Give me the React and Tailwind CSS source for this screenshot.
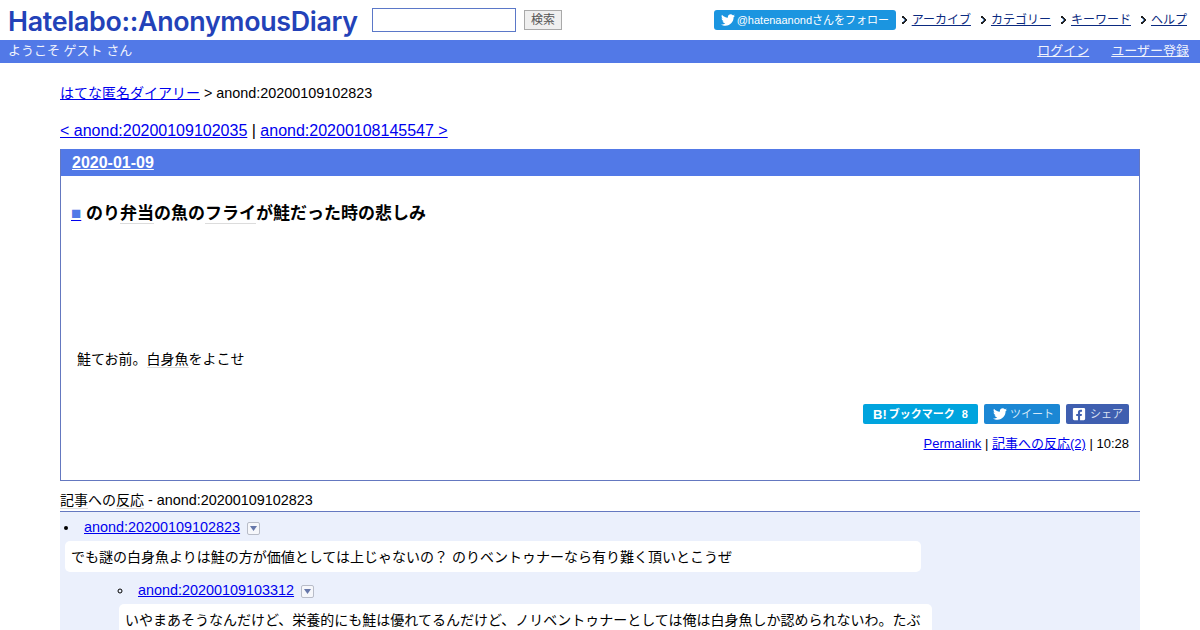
import React from "react";
import { FaTwitter, FaFacebookSquare } from "react-icons/fa";

const Kw = ({ children }) => (
  <span className="border-b border-[#dcdcdc]">{children}</span>
);

const L = ({ children }) => <span className="text-[14.4px]">{children}</span>;

const Arrow = () => (
  <svg width="7" height="10" viewBox="0 0 7 10" className="mr-[3px] shrink-0">
    <path d="M0 1h2v1h1v1h1v1h1v2h-1v1h-1v1h-1v1h-2v-2h1v-1h1v-2h-1v-1h-1z" fill="#222" />
    <path d="M1 3h1v1h1v2h-1v1h-1v-1h1v-2h-1z" fill="#5a8cc8" />
  </svg>
);

const Nav = ({ children, className = "" }) => (
  <div className={`flex items-center ${className}`}>
    <Arrow />
    <a href="#" className="text-[12px] text-[#0b2a80] underline leading-none">{children}</a>
  </div>
);

const Caret = () => (
  <span className="ml-[7px] inline-flex h-[13px] w-[13px] items-center justify-center rounded-[2px] border border-[#b8bcc8] bg-[#f6f7fb] align-[1px]">
    <svg width="7" height="5" viewBox="0 0 7 5"><path d="M0 0h7L3.5 5z" fill="#6677aa" /></svg>
  </span>
);

export default function App() {
  return (
    <div className="h-[630px] w-[1200px] overflow-hidden bg-white font-['Liberation_Sans','Noto_Sans_CJK_JP',sans-serif] text-[14px] text-black">
      <header className="flex h-[40px] items-center pl-[8px] pr-[13px]">
        <div className="w-[352px] whitespace-nowrap font-['Inter',sans-serif] text-[26.8px] font-semibold leading-none tracking-[-0.3px] text-[#2342b8] relative top-[1px]">Hatelabo::AnonymousDiary</div>
        <input className="ml-[12px] h-[24px] w-[144px] border border-[#5b78c8] bg-white" />
        <button className="ml-[8px] h-[20px] w-[38px] border border-[#a9a9a9] bg-[#efefef] text-[12px] leading-none text-[#555]">検索</button>
        <div className="ml-auto flex items-center">
          <a className="flex h-[20px] w-[182px] items-center rounded-[3px] bg-[#1b95e0] pl-[7px] text-[11px] text-white">
            <FaTwitter className="mr-[2px] text-[14px]" />
            <span className="whitespace-nowrap">@hatenaanondさんをフォロー</span>
          </a>
          <Nav className="ml-[6px]">アーカイブ</Nav>
          <Nav className="ml-[10px]">カテゴリー</Nav>
          <Nav className="ml-[10px]">キーワード</Nav>
          <Nav className="ml-[10px]">ヘルプ</Nav>
        </div>
      </header>

      <div className="flex h-[23px] items-center bg-[#5279e7] pb-[1px] pl-[8px] pr-[11px] text-[13px] text-[#f0f3fc]">
        <span>ようこそ ゲスト さん</span>
        <div className="ml-auto flex gap-[22px]">
          <a href="#" className="underline">ログイン</a>
          <a href="#" className="underline">ユーザー登録</a>
        </div>
      </div>

      <main className="px-[60px]">
        <p className="mt-[21px] leading-[18px]">
          <a href="#" className="text-[#0000ee] underline">はてな匿名ダイアリー</a> <L>&gt; anond:20200109102823</L>
        </p>
        <p className="mt-[19px] text-[16px] leading-[20px]">
          <a href="#" className="text-[#0000ee] underline">&lt; anond:20200109102035</a> | <a href="#" className="text-[#0000ee] underline">anond:20200108145547 &gt;</a>
        </p>

        <section className="mt-[8px] h-[332px] border border-[#5279e7] border-x-[#6478c0] border-b-[#6478c0]">
          <div className="flex h-[26px] items-center bg-[#5279e7] pl-[11px]">
            <a href="#" className="text-[16px] font-bold text-white underline">2020-01-09</a>
          </div>
          <h1 className="ml-[10px] mt-[27px] text-[17px] font-bold leading-[22px]">
            <a href="#" className="font-normal text-[#5279e7] underline decoration-[#0000ee]">■</a>{" "}
            のり<Kw>弁当</Kw>の魚の<Kw>フライ</Kw>が鮭だった時の悲しみ
          </h1>
          <p className="ml-[16px] mt-[124px] leading-[20px]">
            鮭てお前。<Kw>白身魚</Kw>をよこせ
          </p>
          <div className="mr-[10px] mt-[35px] flex justify-end gap-[6px] text-white">
            <a className="flex h-[20px] w-[115px] items-center rounded-[2px] bg-[#00a4de] pl-[10px] text-[11px] font-bold">
              <span className="text-[13px] leading-none">B!</span>
              <span className="ml-[2px] whitespace-nowrap">ブックマーク</span>
              <span className="ml-[7px] font-bold text-[11px]">8</span>
            </a>
            <a className="flex h-[20px] w-[76px] items-center rounded-[2px] bg-[#1b87d4] pl-[9px] text-[11px] text-[#d4e8f8]">
              <FaTwitter className="mr-[3px] text-[14px] text-white" />ツイート
            </a>
            <a className="flex h-[20px] w-[63px] items-center rounded-[2px] bg-[#3f5fb0] pl-[6px] text-[11px] text-[#d8e0f2]">
              <FaFacebookSquare className="mr-[4px] text-[14px] text-white" />シェア
            </a>
          </div>
          <p className="mr-[10px] mt-[11px] text-right text-[13px] leading-[18px]">
            <a href="#" className="text-[#0000ee] underline">Permalink</a> | <a href="#" className="text-[#0000ee] underline">記事への反応(2)</a> | 10:28
          </p>
        </section>

        <h2 className="mt-[9px] h-[22px] border-b border-[#6478c0] text-[14px] leading-[20px]">
          <Kw>記事</Kw>への<Kw>反応</Kw> <L>- anond:20200109102823</L>
        </h2>
        <div className="h-[200px] bg-[#ebf0fc] pl-[5px] pt-[6px]">
          <ul className="list-disc pl-[14px]">
            <li className="leading-[18px]">
              <a href="#" className="ml-[5px] text-[14.4px] text-[#0000ee] underline">anond:20200109102823</a>
              <Caret />
            </li>
          </ul>
          <div className="mt-[5px] flex h-[31px] w-[856px] items-center rounded-[5px] bg-white px-[6px] pt-[1px]">
            でも謎の白身魚よりは鮭の方が価値としては上じゃないの？ のりベントゥナーなら有り難く頂いとこうぜ
          </div>
          <div className="pl-[54px] pt-[9px]">
            <ul className="list-[circle] pl-[14px]">
              <li className="leading-[18px]">
                <a href="#" className="ml-[5px] text-[14.4px] text-[#0000ee] underline">anond:20200109103312</a>
                <Caret />
              </li>
            </ul>
            <div className="mt-[5px] w-[813px] rounded-[5px] bg-white px-[6px] py-[6px] leading-[20px]">
              いやまあそうなんだけど、栄養的にも鮭は優れてるんだけど、ノリベントゥナーとしては俺は白身魚しか認められないわ。たぶ
            </div>
          </div>
        </div>
      </main>
    </div>
  );
}
